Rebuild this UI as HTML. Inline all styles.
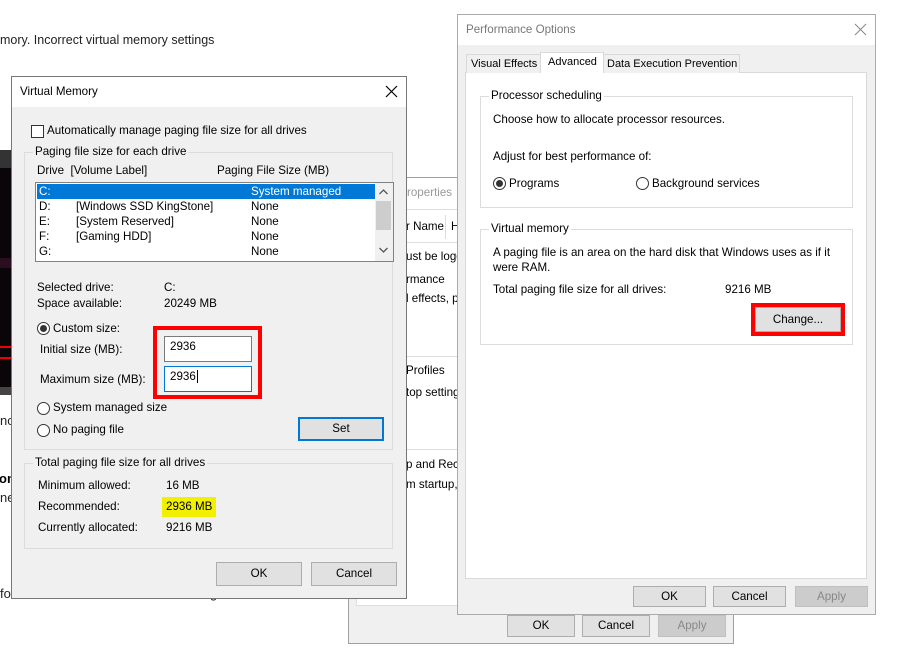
<!DOCTYPE html>
<html><head><meta charset="utf-8"><style>
*{box-sizing:border-box;margin:0;padding:0}
body{width:899px;height:654px;background:#fff;position:relative;overflow:hidden;font-family:"Liberation Sans",sans-serif;font-size:11.6px;color:#000}
.a{position:absolute;white-space:nowrap}
.t{position:absolute;white-space:nowrap;line-height:14px}
.btn{position:absolute;background:#e1e1e1;border:1px solid #adadad;text-align:center;line-height:20px}
.grp{position:absolute;border:1px solid #dcdcdc}
.gl{position:absolute;top:-8px;left:8px;background:#f0f0f0;padding:0 2px;line-height:14px}
.rad{position:absolute;width:13px;height:13px;border:1px solid #333;border-radius:50%;background:#fff}
.rad.on::after{content:"";position:absolute;left:2px;top:2px;width:7px;height:7px;border-radius:50%;background:#333}
</style></head><body>

<div class="t" style="left:0;top:33px;font-size:12.5px;color:#222">mory. Incorrect virtual memory settings</div>
<div class="a" style="left:0;top:150px;width:12px;height:245px;background:#0a0508"></div>
<div class="a" style="left:0;top:150px;width:12px;height:18px;background:#333"></div>
<div class="a" style="left:0;top:258px;width:12px;height:10px;background:#2a0e20"></div>
<div class="a" style="left:0;top:346px;width:12px;height:2px;background:#e00"></div>
<div class="a" style="left:0;top:357px;width:12px;height:2px;background:#e00"></div>
<div class="a" style="left:0;top:387px;width:12px;height:8px;background:#444"></div>
<div class="t" style="left:0;top:414px;font-size:13px;color:#222">nc</div>
<div class="t" style="left:-1px;top:472px;font-size:13px;font-weight:bold">om</div>
<div class="t" style="left:0;top:491px;font-size:13px;color:#222">ne</div>
<div class="t" style="left:0;top:587px;font-size:13px;color:#222">fo</div>
<div class="t" style="left:210px;top:587px;font-size:13px;color:#222">g</div>

<div class="a" style="left:348px;top:177px;width:386px;height:467px;background:#f0f0f0;border:1px solid #a0a0a0"></div>
<div class="a" style="left:349px;top:178px;width:110px;height:31px;background:#fff"></div>
<div class="t" style="left:407px;top:186px;color:#999">roperties</div>
<div class="a" style="left:356px;top:209px;width:375px;height:397px;background:#fff;border:1px solid #ddd"></div>
<div class="a" style="left:356px;top:209px;width:110px;height:34px;border-bottom:1px solid #ddd;border-top:1px solid #ddd"></div>
<div class="a" style="left:445px;top:215px;width:1px;height:24px;background:#ddd"></div>
<div class="t" style="left:406px;top:220px">r Name</div>
<div class="t" style="left:451px;top:220px">H</div>
<div class="t" style="left:406px;top:250px">ust be logg</div>
<div class="t" style="left:406px;top:273px">rmance</div>
<div class="t" style="left:406px;top:292px">l effects, pr</div>
<div class="a" style="left:356px;top:356px;width:110px;height:1px;background:#ddd"></div>
<div class="t" style="left:406px;top:364px">Profiles</div>
<div class="t" style="left:406px;top:386px">top settings</div>
<div class="a" style="left:356px;top:449px;width:110px;height:1px;background:#ddd"></div>
<div class="t" style="left:406px;top:458px">p and Rec</div>
<div class="t" style="left:406px;top:478px">m startup, s</div>
<div class="btn" style="left:507px;top:615px;width:68px;height:22px">OK</div>
<div class="btn" style="left:582px;top:615px;width:68px;height:22px">Cancel</div>
<div class="btn" style="left:658px;top:615px;width:68px;height:22px;background:#ccc;border-color:#bfbfbf;color:#888">Apply</div>

<div class="a" style="left:457px;top:14px;width:419px;height:601px;background:#f0f0f0;border:1px solid #aaa"></div>
<div class="a" style="left:458px;top:15px;width:417px;height:30px;background:#fff"></div>
<div class="t" style="left:466px;top:23px;color:#777">Performance Options</div>
<svg class="a" style="left:854px;top:23px" width="13" height="13"><path d="M1 1L12 12M12 1L1 12" stroke="#888" stroke-width="1"/></svg>
<div class="a" style="left:465px;top:72px;width:402px;height:507px;background:#fff;border:1px solid #d9d9d9"></div>
<div class="a" style="left:466px;top:54px;width:75px;height:19px;background:#f0f0f0;border:1px solid #d9d9d9;border-bottom:none"></div>
<div class="t" style="left:471px;top:57px;font-size:11px">Visual Effects</div>
<div class="a" style="left:540px;top:52px;width:64px;height:21px;background:#fff;border:1px solid #d9d9d9;border-bottom:none"></div>
<div class="t" style="left:548px;top:55px;font-size:11px">Advanced</div>
<div class="a" style="left:603px;top:54px;width:137px;height:19px;background:#f0f0f0;border:1px solid #d9d9d9;border-bottom:none"></div>
<div class="t" style="left:607px;top:57px;font-size:11px">Data Execution Prevention</div>
<div class="grp" style="left:480px;top:96px;width:373px;height:112px"><div class="gl" style="background:#fff">Processor scheduling</div></div>
<div class="t" style="left:493px;top:113px">Choose how to allocate processor resources.</div>
<div class="t" style="left:493px;top:150px">Adjust for best performance of:</div>
<div class="rad on" style="left:493px;top:177px"></div>
<div class="t" style="left:509px;top:177px">Programs</div>
<div class="rad" style="left:636px;top:177px"></div>
<div class="t" style="left:652px;top:177px">Background services</div>
<div class="grp" style="left:480px;top:229px;width:373px;height:116px"><div class="gl" style="background:#fff">Virtual memory</div></div>
<div class="t" style="left:493px;top:246px">A paging file is an area on the hard disk that Windows uses as if it</div>
<div class="t" style="left:493px;top:261px">were RAM.</div>
<div class="t" style="left:493px;top:283px">Total paging file size for all drives:</div>
<div class="t" style="left:725px;top:283px">9216 MB</div>
<div class="a" style="left:751px;top:303px;width:94px;height:33px;border:4px solid #f00"></div>
<div class="btn" style="left:755px;top:307px;width:86px;height:25px;line-height:23px">Change...</div>
<div class="btn" style="left:633px;top:586px;width:73px;height:21px;line-height:19px">OK</div>
<div class="btn" style="left:713px;top:586px;width:73px;height:21px;line-height:19px">Cancel</div>
<div class="btn" style="left:795px;top:586px;width:73px;height:21px;line-height:19px;background:#ccc;border-color:#bfbfbf;color:#888">Apply</div>

<div class="a" style="left:11px;top:76px;width:396px;height:523px;background:#f0f0f0;border:1px solid #777"></div>
<div class="a" style="left:12px;top:77px;width:394px;height:30px;background:#fff"></div>
<div class="t" style="left:20px;top:85px">Virtual Memory</div>
<svg class="a" style="left:385px;top:85px" width="13" height="13"><path d="M1 1L12 12M12 1L1 12" stroke="#000" stroke-width="1.2"/></svg>
<div class="a" style="left:31px;top:125px;width:13px;height:13px;border:1px solid #333;background:#fff"></div>
<div class="t" style="left:47px;top:124px">Automatically manage paging file size for all drives</div>
<div class="grp" style="left:24px;top:152px;width:369px;height:298px"><div class="gl">Paging file size for each drive</div></div>
<div class="t" style="left:37px;top:164px">Drive&nbsp; [Volume Label]</div>
<div class="t" style="left:217px;top:164px">Paging File Size (MB)</div>
<div class="a" style="left:35px;top:182px;width:359px;height:80px;background:#fff;border:1px solid #828282"></div>
<div class="a" style="left:37px;top:184px;width:338px;height:15px;background:#0078d7"></div>
<div class="a" style="left:375px;top:183px;width:18px;height:78px;background:#f0f0f0"></div>
<div class="a" style="left:376px;top:201px;width:15px;height:29px;background:#cdcdcd"></div>
<svg class="a" style="left:379px;top:189px" width="9" height="6"><path d="M0.5 5L4.5 1L8.5 5" stroke="#555" fill="none" stroke-width="1.3"/></svg>
<svg class="a" style="left:379px;top:247px" width="9" height="6"><path d="M0.5 1L4.5 5L8.5 1" stroke="#555" fill="none" stroke-width="1.3"/></svg>
<div class="t" style="left:39px;top:185px;color:#fff">C:</div><div class="t" style="left:251px;top:185px;color:#fff">System managed</div>
<div class="t" style="left:39px;top:200px">D:</div><div class="t" style="left:76px;top:200px">[Windows SSD KingStone]</div><div class="t" style="left:251px;top:200px">None</div>
<div class="t" style="left:39px;top:215px">E:</div><div class="t" style="left:76px;top:215px">[System Reserved]</div><div class="t" style="left:251px;top:215px">None</div>
<div class="t" style="left:39px;top:230px">F:</div><div class="t" style="left:76px;top:230px">[Gaming HDD]</div><div class="t" style="left:251px;top:230px">None</div>
<div class="t" style="left:39px;top:245px">G:</div><div class="t" style="left:251px;top:245px">None</div>
<div class="t" style="left:37px;top:281px">Selected drive:</div><div class="t" style="left:164px;top:281px">C:</div>
<div class="t" style="left:37px;top:297px">Space available:</div><div class="t" style="left:164px;top:297px">20249 MB</div>
<div class="rad on" style="left:37px;top:322px"></div>
<div class="t" style="left:53px;top:322px">Custom size:</div>
<div class="t" style="left:40px;top:343px">Initial size (MB):</div>
<div class="t" style="left:40px;top:373px">Maximum size (MB):</div>
<div class="a" style="left:153px;top:326px;width:109px;height:73px;border:4px solid #f00"></div>
<div class="a" style="left:164px;top:336px;width:88px;height:26px;background:#fff;border:1px solid #7a7a7a"></div>
<div class="t" style="left:170px;top:340px">2936</div>
<div class="a" style="left:164px;top:366px;width:88px;height:26px;background:#fff;border:1px solid #0078d7"></div>
<div class="t" style="left:170px;top:370px">2936<span style="border-left:1px solid #000;margin-left:1px"></span></div>
<div class="rad" style="left:37px;top:402px"></div>
<div class="t" style="left:53px;top:401px">System managed size</div>
<div class="rad" style="left:37px;top:424px"></div>
<div class="t" style="left:53px;top:423px">No paging file</div>
<div class="btn" style="left:298px;top:417px;width:86px;height:24px;border:2px solid #0078d7;line-height:20px">Set</div>
<div class="grp" style="left:24px;top:463px;width:369px;height:86px"><div class="gl">Total paging file size for all drives</div></div>
<div class="t" style="left:38px;top:479px">Minimum allowed:</div><div class="t" style="left:166px;top:479px">16 MB</div>
<div class="t" style="left:38px;top:500px">Recommended:</div>
<div class="a" style="left:162px;top:497px;width:54px;height:20px;background:#f0f000"></div>
<div class="t" style="left:166px;top:500px">2936 MB</div>
<div class="t" style="left:38px;top:521px">Currently allocated:</div><div class="t" style="left:166px;top:521px">9216 MB</div>
<div class="btn" style="left:216px;top:562px;width:86px;height:24px;line-height:22px">OK</div>
<div class="btn" style="left:311px;top:562px;width:86px;height:24px;line-height:22px">Cancel</div>
</body></html>
